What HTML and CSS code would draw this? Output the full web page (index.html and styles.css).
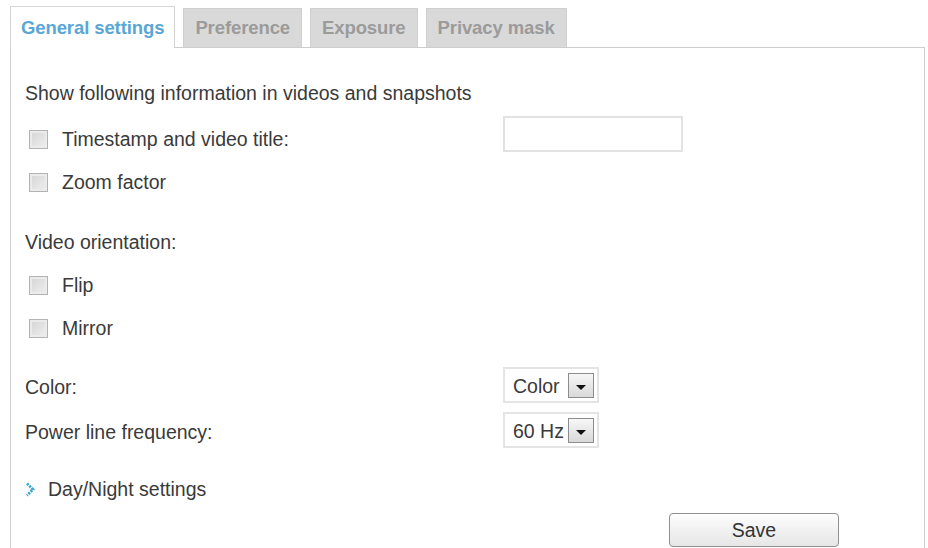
FILE: index.html
```html
<!DOCTYPE html>
<html>
<head>
<meta charset="utf-8">
<link rel="stylesheet" href="styles.css">
</head>
<body>
<div class="tabs">
  <div class="tab active">General settings</div>
  <div class="tab">Preference</div>
  <div class="tab">Exposure</div>
  <div class="tab">Privacy mask</div>
</div>
<div class="panel">
  <div class="heading">Show following information in videos and snapshots</div>
  <div class="row check-row first">
    <div class="label"><span class="cb"></span>Timestamp and video title:</div>
    <div class="textbox"></div>
  </div>
  <div class="row check-row">
    <div class="label"><span class="cb"></span>Zoom factor</div>
  </div>
  <div class="heading orient">Video orientation:</div>
  <div class="row check-row flip">
    <div class="label"><span class="cb"></span>Flip</div>
  </div>
  <div class="row check-row">
    <div class="label"><span class="cb"></span>Mirror</div>
  </div>
  <div class="row sel-row color-row">
    <div class="label plain">Color:</div>
    <div class="select"><span class="sel-text">Color</span><span class="drop"><svg width="12" height="7" viewBox="0 0 12 7"><path d="M1 1 L11 1 L6 6 Z" fill="#111"/></svg></span></div>
  </div>
  <div class="row sel-row power-row">
    <div class="label plain">Power line frequency:</div>
    <div class="select"><span class="sel-text">60 Hz</span><span class="drop"><svg width="12" height="7" viewBox="0 0 12 7"><path d="M1 1 L11 1 L6 6 Z" fill="#111"/></svg></span></div>
  </div>
  <div class="daynight">
    <svg class="chev" width="10" height="15" viewBox="0 0 10 15"><path d="M2 1.5 L8 7.5 L2 13.5" fill="none" stroke="#3aa6d6" stroke-width="2.8" stroke-dasharray="2.2 1"/></svg>
    <span>Day/Night settings</span>
  </div>
  <div class="save-row"><button class="save">Save</button></div>
</div>
</body>
</html>
```

FILE: styles.css
```css
html, body {
  margin: 0;
  padding: 0;
  background: #fff;
}
body {
  font-family: "Liberation Sans", Arial, sans-serif;
  font-size: 19.5px;
  color: #3a3a3a;
  width: 928px;
  height: 548px;
  overflow: hidden;
}
.tabs {
  display: flex;
  align-items: flex-end;
  padding: 7px 0 0 10px;
  height: 40px;
  position: relative;
  z-index: 1;
}
.tab {
  height: 39px;
  box-sizing: border-box;
  line-height: 38px;
  padding: 0 11px;
  margin-right: 8px;
  background: #d9d9d9;
  border: 1px solid #cfcfcf;
  border-bottom: none;
  color: #9b9b9b;
  font-weight: bold;
  font-size: 18.5px;
  letter-spacing: -0.1px;
}
.tab.active {
  height: 42px;
  line-height: 42px;
  background: #fff;
  color: #5aa6d6;
  border-color: #d4d4d4;
  padding: 0 10px;
  margin-bottom: -1px;
  margin-right: 8px;
}
.panel {
  margin-left: 10px;
  width: 915px;
  height: 501px;
  box-sizing: border-box;
  border: 1px solid #cdcdcd;
  border-bottom: none;
  padding: 34px 0 0 14px;
  overflow: hidden;
}
.heading {
  line-height: 22px;
  height: 22px;
}
.heading.orient {
  margin-top: 27px;
}
.row {
  display: flex;
  align-items: center;
}
.label {
  width: 478px;
  display: flex;
  align-items: center;
}
.check-row {
  height: 43px;
}
.check-row .label {
  padding-left: 4px;
  width: 474px;
}
.check-row.first {
  margin-top: 14px;
}
.check-row.flip {
  margin-top: 11px;
}
.cb {
  display: inline-block;
  width: 17px;
  height: 17px;
  border: 1px solid #b3b3b3;
  background: linear-gradient(135deg, #d4d4d4, #efefef);
  box-shadow: inset 0 0 0 2px #ebebeb;
  margin-right: 14px;
  flex: none;
}
.textbox {
  width: 180px;
  height: 36px;
  box-sizing: border-box;
  border: 2px solid #e2e2e2;
  align-self: flex-start;
  margin-top: -2px;
}
.sel-row {
  height: 36px;
}
.sel-row .label {
  padding-top: 5px;
}
.color-row {
  margin-top: 17px;
}
.power-row {
  margin-top: 9px;
}
.select {
  width: 96px;
  height: 36px;
  box-sizing: border-box;
  border: 2px solid #e4e4e4;
  display: flex;
  align-items: center;
  padding-left: 8px;
}
.sel-text {
  width: 55px;
  padding-top: 2px;
}
.drop {
  width: 26px;
  height: 25px;
  box-sizing: border-box;
  border: 1px solid #8c8c8c;
  background: linear-gradient(#f7f7f7, #d9d9d9);
  display: flex;
  align-items: center;
  justify-content: center;
}
.drop svg {
  margin-top: 4px;
}
.daynight {
  margin-top: 30px;
  height: 22px;
  line-height: 22px;
  display: flex;
  align-items: center;
  padding-left: 0;
}
.chev {
  margin-right: 13px;
}
.save-row {
  margin-top: 13px;
  padding-left: 644px;
}
.save {
  width: 170px;
  height: 34px;
  border: 1px solid #8f8f8f;
  border-radius: 4px;
  background: linear-gradient(#fdfdfd, #e6e6e6);
  font-family: "Liberation Sans", Arial, sans-serif;
  font-size: 19.5px;
  color: #333;
  padding: 0;
}
```
